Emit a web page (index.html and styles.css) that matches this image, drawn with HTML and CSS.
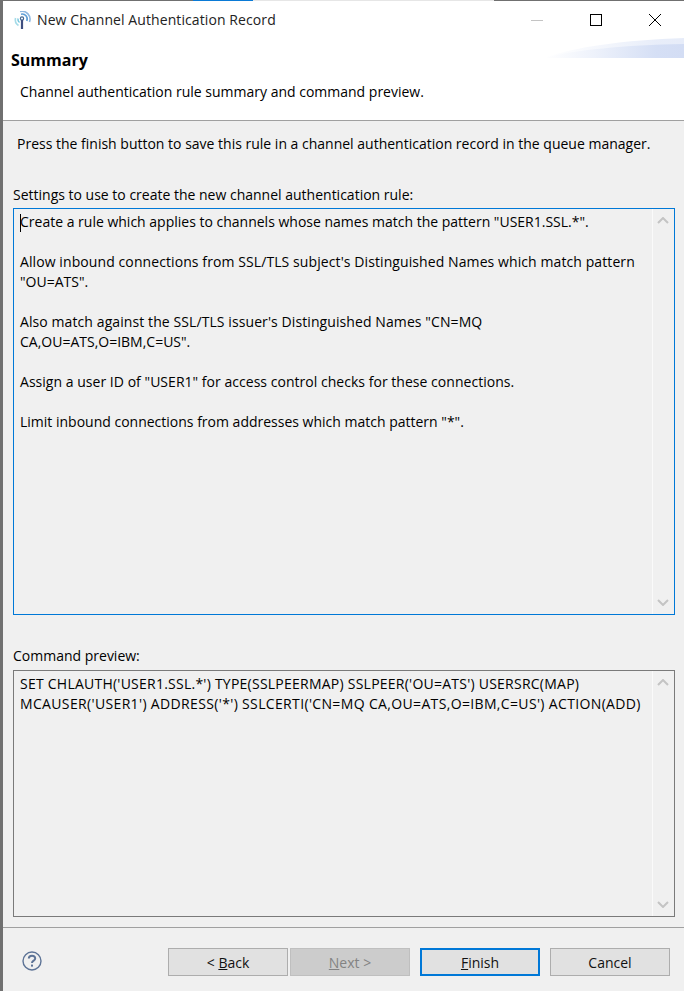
FILE: index.html
```html
<!DOCTYPE html>
<html lang="en">

<head>
    <meta charset="UTF-8">
    <meta name="viewport" content="width=device-width, initial-scale=1.0">
    <title>New Channel Authentication Record</title>
    <link rel="stylesheet" href="styles.css">
</head>

<body>
    <div class="dialog">
        <!-- Edge of the windows behind -->
        <div class="top-edge">
            <span class="edge-dark edge-a"></span>
            <span class="edge-blue"></span>
            <span class="edge-light"></span>
            <span class="edge-dark edge-b"></span>
        </div>

        <!-- Title bar -->
        <div class="title-bar">
            <svg class="app-icon" width="18" height="18" viewBox="0 0 18 18" fill="none">
                <path d="M2.5 7 A7 7 0 0 0 5.5 14.5" stroke="#a5dbe8" stroke-width="1.6"/>
                <path d="M5 7.5 A4 4 0 0 0 6.5 11.5" stroke="#6cc3dc" stroke-width="1.4"/>
                <path d="M7 0.5 A8 8 0 0 1 16.5 11" stroke="#8fb8e0" stroke-width="1.6"/>
                <path d="M8 3.2 A5 5 0 0 1 13.8 10" stroke="#5f9fd6" stroke-width="1.6"/>
                <circle cx="9" cy="7.5" r="1.6" stroke="#41648f" stroke-width="1.2"/>
                <path d="M9 9 V18" stroke="#3f4f80" stroke-width="2.2"/>
            </svg>
            <span class="title-text">New Channel Authentication Record</span>
            <div class="window-controls">
                <svg width="12" height="12" viewBox="0 0 12 12" fill="none"><path d="M0 6.5 H12" stroke="#c4c4c4"/></svg>
                <svg width="12" height="12" viewBox="0 0 12 12" fill="none"><rect x="0.5" y="0.5" width="11" height="11" stroke="#000"/></svg>
                <svg width="12" height="12" viewBox="0 0 12 12" fill="none"><path d="M0 0 L12 12 M12 0 L0 12" stroke="#000"/></svg>
            </div>
        </div>

        <!-- Wizard banner -->
        <div class="banner">
            <svg class="swoosh" width="140" height="20" viewBox="0 0 140 20">
                <defs>
                    <linearGradient id="swooshFill" x1="0" x2="1" y1="0" y2="0">
                        <stop offset="0" stop-color="#ffffff"/>
                        <stop offset="0.35" stop-color="#eef2fb"/>
                        <stop offset="0.8" stop-color="#d5dff5"/>
                        <stop offset="1" stop-color="#d3ddf4"/>
                    </linearGradient>
                </defs>
                <path d="M0 20 C30 9 80 2 140 0 V20 Z" fill="url(#swooshFill)" opacity="0.55"/>
                <path d="M0 20 C30 12 80 7 140 6 V20 Z" fill="url(#swooshFill)"/>
            </svg>
            <h1 class="banner-title">Summary</h1>
            <p class="banner-desc">Channel authentication rule summary and command preview.</p>
        </div>

        <!-- Page content -->
        <div class="content">
            <p class="intro">Press the finish button to save this rule in a channel authentication record in the queue manager.</p>

            <label class="field-label label-settings">Settings to use to create the new channel authentication rule:</label>
            <div class="text-box settings-box focused">
                <div class="box-text"><span class="caret"></span>Create a rule which applies to channels whose names match the pattern "USER1.SSL.*".

<span class="track-s">Allow inbound connections from SSL/TLS subject's Distinguished Names which match pattern</span>
"OU=ATS".

<span class="track-s">Also match against the SSL/TLS issuer's Distinguished Names "CN=MQ</span>
CA,OU=ATS,O=IBM,C=US".

<span class="track-xs">Assign a user ID of "USER1" for access control checks for these connections.</span>

Limit inbound connections from addresses which match pattern "*".</div>
                <div class="scroll-col">
                    <svg width="12" height="7" viewBox="0 0 12 7" fill="none"><path d="M1 6 L6 1 L11 6" stroke="#c4c4c4" stroke-width="2"/></svg>
                    <svg width="12" height="7" viewBox="0 0 12 7" fill="none"><path d="M1 1 L6 6 L11 1" stroke="#c4c4c4" stroke-width="2"/></svg>
                </div>
            </div>

            <label class="field-label label-preview">Command preview:</label>
            <div class="text-box preview-box">
                <div class="box-text"><span class="track-m">SET CHLAUTH('USER1.SSL.*') TYPE(SSLPEERMAP) SSLPEER('OU=ATS') USERSRC(MAP)</span>
<span class="track-l">MCAUSER('USER1') ADDRESS('*') SSLCERTI('CN=MQ CA,OU=ATS,O=IBM,C=US') ACTION(ADD)</span></div>
                <div class="scroll-col">
                    <svg width="12" height="7" viewBox="0 0 12 7" fill="none"><path d="M1 6 L6 1 L11 6" stroke="#c4c4c4" stroke-width="2"/></svg>
                    <svg width="12" height="7" viewBox="0 0 12 7" fill="none"><path d="M1 1 L6 6 L11 1" stroke="#c4c4c4" stroke-width="2"/></svg>
                </div>
            </div>
        </div>

        <!-- Buttons -->
        <div class="footer">
            <svg class="help-icon" width="20" height="20" viewBox="0 0 20 20" fill="none">
                <circle cx="10" cy="10" r="9" stroke="#5d7396" stroke-width="1.4"/>
                <path d="M6.8 7.6 C6.8 3.9 13.2 3.9 13.2 7.4 C13.2 9.6 10 9.6 10 12" stroke="#5d7396" stroke-width="2"/>
                <rect x="9" y="13.6" width="2" height="2" fill="#5d7396"/>
            </svg>
            <div class="buttons">
                <button class="btn">&lt; <u>B</u>ack</button>
                <button class="btn btn-disabled" disabled><u>N</u>ext &gt;</button>
                <button class="btn btn-default"><u>F</u>inish</button>
                <button class="btn">Cancel</button>
            </div>
        </div>
    </div>
</body>

</html>
```

FILE: styles.css
```css
/* Global Styles */
body {
    margin: 0;
    font-family: "Open Sans", "Noto Sans", sans-serif;
    font-size: 14px;
    color: #000;
    background-color: #f0f0f0;
}

.dialog {
    display: flex;
    flex-direction: column;
    width: 684px;
    height: 991px;
    box-sizing: border-box;
    border-left: 3px solid #707070;
    overflow: hidden;
}

/* Top Edge */
.top-edge {
    display: flex;
    height: 1px;
    margin-left: -3px;
    flex: none;
}

.edge-dark {
    background: #707070;
}

.edge-a {
    width: 193px;
}

.edge-blue {
    width: 60px;
    background: #0a7ad6;
}

.edge-light {
    width: 241px;
    background: #e6e6e6;
}

.edge-b {
    flex: 1;
}

/* Title Bar */
.title-bar {
    display: flex;
    align-items: center;
    height: 37px;
    flex: none;
    background: #fff;
    padding-left: 10px;
}

.app-icon {
    margin-right: 6px;
}

.title-text {
    color: #222;
    letter-spacing: 0.09px;
}

.window-controls {
    display: flex;
    gap: 47px;
    margin-left: auto;
    margin-right: 23px;
}

/* Banner */
.banner {
    position: relative;
    height: 83px;
    flex: none;
    box-sizing: border-box;
    background: #fff;
    border-bottom: 1px solid #a0a0a0;
    padding: 11px 0 0 8px;
}

.swoosh {
    position: absolute;
    top: 0;
    right: 0;
}

.banner-title {
    margin: 0;
    font-size: 16px;
    font-weight: 700;
    line-height: 22px;
    color: #000;
}

.banner-desc {
    margin: 11px 0 0 9px;
    line-height: 20px;
}

/* Content */
.content {
    flex: 1;
    display: flex;
    flex-direction: column;
    padding: 0 9px 0 10px;
    min-height: 0;
}

.intro {
    margin: 13px 0 0 4px;
    line-height: 20px;
}

.field-label {
    display: block;
    line-height: 20px;
}

.label-settings {
    margin-top: 31px;
    margin-bottom: 3px;
}

.label-preview {
    margin-top: 31px;
    margin-bottom: 4px;
}

.text-box {
    display: flex;
    box-sizing: border-box;
    border: 1px solid #7a7a7a;
}

.text-box.focused {
    border-color: #0078d7;
}

.settings-box {
    height: 407px;
}

.preview-box {
    height: 247px;
}

.box-text {
    flex: 1;
    position: relative;
    padding: 3px 0 0 6px;
    line-height: 20px;
    white-space: pre;
}

/* Small per-line tracking to match the original text widths */
.track-xs {
    letter-spacing: 0.03px;
}

.track-s {
    letter-spacing: 0.09px;
}

.track-m {
    letter-spacing: 0.24px;
}

.track-l {
    letter-spacing: 0.35px;
}

.caret {
    position: absolute;
    top: 5px;
    left: 6px;
    height: 18px;
    border-left: 1px solid #000;
}

.scroll-col {
    width: 22px;
    flex: none;
    display: flex;
    flex-direction: column;
    justify-content: space-between;
    align-items: center;
    box-sizing: border-box;
    border-left: 1px solid #fafafa;
    padding: 8px 2px 8px 0;
}

/* Footer */
.footer {
    display: flex;
    align-items: center;
    height: 64px;
    flex: none;
    box-sizing: border-box;
    border-top: 1px solid #a0a0a0;
    padding: 0 14px 0 19px;
}

.help-icon {
    margin-top: 3px;
}

.buttons {
    display: flex;
    margin-left: auto;
    margin-top: 5px;
}

.btn {
    width: 120px;
    height: 28px;
    box-sizing: border-box;
    background: #e1e1e1;
    border: 1px solid #adadad;
    font: inherit;
    color: #111;
    padding: 0;
}

.btn + .btn {
    margin-left: 10px;
}

.btn-disabled {
    margin-left: 2px !important;
    background: #cccccc;
    border-color: #bfbfbf;
    color: #838383;
}

.btn-default {
    border: 2px solid #0078d7;
}
```
